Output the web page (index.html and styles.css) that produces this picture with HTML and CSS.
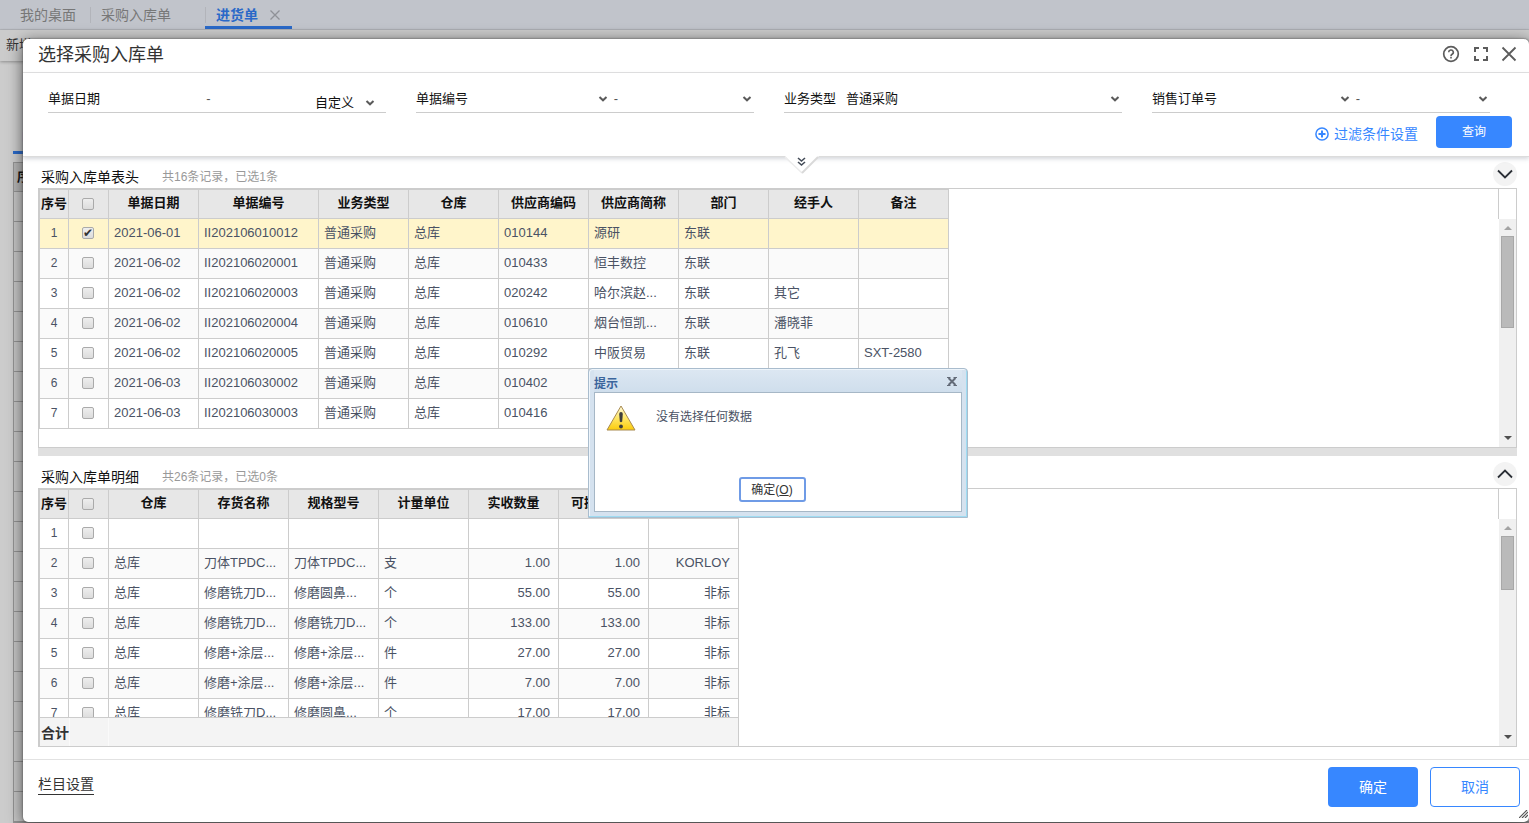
FILE: index.html
```html
<!DOCTYPE html>
<html lang="zh-CN">
<head>
<meta charset="utf-8">
<title>进货单</title>
<link rel="stylesheet" href="styles.css">
</head>
<body>
<svg class="defs" width="0" height="0" aria-hidden="true">
  <symbol id="chev" viewBox="0 0 10 10"><path d="M1.500 3 5 6.300 8.500 3" fill="none" stroke="#5a5a5a" stroke-width="2"/></symbol>
</svg>
<div class="page">
  <nav class="tabs">
    <a class="tab" href="#">我的桌面</a>
    <a class="tab tab-wide" href="#">采购入库单</a>
    <a class="tab active" href="#">进货单 <svg width="12" height="12" viewBox="0 0 12 12"><path d="M1.500 1.500l9 9M10.500 1.500l-9 9" stroke="#8f9197" stroke-width="1.300"/></svg></a>
  </nav>
  <div class="toolbar">新增</div>
  <div class="sheet">
    <div class="sheet-tab">明细</div>
    <div class="sheet-grid"><div class="sheet-head">序号</div></div>
  </div>
</div>

<section class="modal" aria-label="选择采购入库单">
  <header class="modal-head">
    <h1>选择采购入库单</h1>
    <button type="button" aria-label="帮助"><svg width="18" height="18" viewBox="0 0 18 18" fill="none" stroke="#5c5c5c"><circle cx="9" cy="9" r="7.300" stroke-width="1.700"/><path d="M6.700 7.300a2.300 2.300 0 1 1 3.400 2c-.8.500-1.100.8-1.100 1.600" stroke-width="1.600"/><path d="M9 11.800v1.600" stroke-width="1.600"/></svg></button>
    <button type="button" aria-label="全屏"><svg width="18" height="18" viewBox="0 0 18 18" fill="none" stroke="#5c5c5c" stroke-width="2"><path d="M3 7V3h4M11 3h4v4M15 11v4h-4M7 15H3v-4"/></svg></button>
    <button type="button" aria-label="关闭"><svg width="18" height="18" viewBox="0 0 18 18" stroke="#5c5c5c" stroke-width="1.800"><path d="M2.500 2.500l13 13M15.500 2.500l-13 13"/></svg></button>
  </header>

  <form class="filter">
    <div class="fields">
      <div class="field">
        <label for="d1">单据日期</label>
        <input id="d1" type="text"><span class="dash">-</span><input type="text" aria-label="结束日期">
        <span class="pick range"><select aria-label="日期范围"><option>自定义</option></select><svg width="10" height="10"><use href="#chev"/></svg></span>
      </div>
      <div class="field">
        <label for="n1">单据编号</label>
        <span class="pick"><select id="n1"><option></option></select><svg width="10" height="10"><use href="#chev"/></svg></span><span class="dash">-</span><span class="pick end"><select aria-label="单据编号止"><option></option></select><svg width="10" height="10"><use href="#chev"/></svg></span>
      </div>
      <div class="field">
        <label for="b1">业务类型</label>
        <span class="pick"><select id="b1"><option>普通采购</option></select><svg width="10" height="10"><use href="#chev"/></svg></span>
      </div>
      <div class="field">
        <label for="s1">销售订单号</label>
        <span class="pick"><select id="s1"><option></option></select><svg width="10" height="10"><use href="#chev"/></svg></span><span class="dash">-</span><span class="pick end narrow"><select aria-label="销售订单号止"><option></option></select><svg width="10" height="10"><use href="#chev"/></svg></span>
      </div>
    </div>
    <div class="filter-actions">
      <a href="#"><svg width="14" height="14" viewBox="0 0 14 14" fill="none" stroke="#3787ff"><circle cx="7" cy="7" r="6.100" stroke-width="1.500"/><path d="M3.500 7h7M7 3.500v7" stroke-width="2"/></svg>过滤条件设置</a>
      <button class="primary query" type="button">查询</button>
    </div>
    <svg class="notch" width="36" height="20" viewBox="0 0 36 20" fill="none"><path d="M1 0 18 17 35 0z" fill="#fff"/><path d="M1 1l17 16" stroke="#ececec" stroke-width="1.500"/><path d="M18 17 34 1" stroke="#d9d9d9" stroke-width="2"/><path d="M14 2l3.500 3L21 2M14 6l3.500 3L21 6" stroke="#444c58" stroke-width="1.600"/></svg>
  </form>

  <main class="panels">
    <section class="panel">
      <div class="panel-head"><h2>采购入库单表头</h2><span>共16条记录，已选1条</span>
        <button type="button" aria-label="收起"><svg width="24" height="24" viewBox="0 0 24 24" fill="none" stroke="#2b2f36" stroke-width="1.800"><path d="M5 8.500l7 7 7-7"/></svg></button></div>
      <div class="box">
        <table>
          <colgroup><col class="c-no"><col class="c-ck"><col class="c"><col class="c-id"><col class="c"><col class="c"><col class="c"><col class="c"><col class="c"><col class="c"><col class="c"></colgroup>
          <thead><tr><th class="no">序号</th><th class="ck"><input type="checkbox" aria-label="全选"></th><th>单据日期</th><th>单据编号</th><th>业务类型</th><th>仓库</th><th>供应商编码</th><th>供应商简称</th><th>部门</th><th>经手人</th><th>备注</th></tr></thead>
          <tbody>
            <tr class="picked"><td class="no">1</td><td class="ck"><input type="checkbox" aria-label="选择1" checked></td><td>2021-06-01</td><td>II202106010012</td><td>普通采购</td><td>总库</td><td>010144</td><td>源研</td><td>东联</td><td></td><td></td></tr>
            <tr><td class="no">2</td><td class="ck"><input type="checkbox" aria-label="选择2"></td><td>2021-06-02</td><td>II202106020001</td><td>普通采购</td><td>总库</td><td>010433</td><td>恒丰数控</td><td>东联</td><td></td><td></td></tr>
            <tr><td class="no">3</td><td class="ck"><input type="checkbox" aria-label="选择3"></td><td>2021-06-02</td><td>II202106020003</td><td>普通采购</td><td>总库</td><td>020242</td><td>哈尔滨赵...</td><td>东联</td><td>其它</td><td></td></tr>
            <tr><td class="no">4</td><td class="ck"><input type="checkbox" aria-label="选择4"></td><td>2021-06-02</td><td>II202106020004</td><td>普通采购</td><td>总库</td><td>010610</td><td>烟台恒凯...</td><td>东联</td><td>潘晓菲</td><td></td></tr>
            <tr><td class="no">5</td><td class="ck"><input type="checkbox" aria-label="选择5"></td><td>2021-06-02</td><td>II202106020005</td><td>普通采购</td><td>总库</td><td>010292</td><td>中阪贸易</td><td>东联</td><td>孔飞</td><td>SXT-2580</td></tr>
            <tr><td class="no">6</td><td class="ck"><input type="checkbox" aria-label="选择6"></td><td>2021-06-03</td><td>II202106030002</td><td>普通采购</td><td>总库</td><td>010402</td><td></td><td></td><td></td><td></td></tr>
            <tr><td class="no">7</td><td class="ck"><input type="checkbox" aria-label="选择7"></td><td>2021-06-03</td><td>II202106030003</td><td>普通采购</td><td>总库</td><td>010416</td><td></td><td></td><td></td><td></td></tr>
          </tbody>
        </table>
        <div class="rail"><div class="corner"></div><div class="track"><i class="up"></i><i class="thumb"></i><i class="down"></i></div></div>
      </div>
    </section>
    <div class="splitter"></div>
    <section class="panel lower">
      <div class="panel-head"><h2>采购入库单明细</h2><span>共26条记录，已选0条</span>
        <button type="button" aria-label="展开"><svg width="24" height="24" viewBox="0 0 24 24" fill="none" stroke="#2b2f36" stroke-width="1.800"><path d="M5 15.500l7-7 7 7"/></svg></button></div>
      <div class="box">
        <div class="grid">
          <div class="clip">
            <table>
              <colgroup><col class="c-no"><col class="c-ck"><col class="c"><col class="c"><col class="c"><col class="c"><col class="c"><col class="c"><col class="c"></colgroup>
              <thead><tr><th class="no">序号</th><th class="ck"><input type="checkbox" aria-label="全选明细"></th><th>仓库</th><th>存货名称</th><th>规格型号</th><th>计量单位</th><th>实收数量</th><th>可操作数量</th><th></th></tr></thead>
              <tbody>
                <tr><td class="no">1</td><td class="ck"><input type="checkbox" aria-label="明细1"></td><td></td><td></td><td></td><td></td><td></td><td></td><td></td></tr>
                <tr><td class="no">2</td><td class="ck"><input type="checkbox" aria-label="明细2"></td><td>总库</td><td>刀体TPDC...</td><td>刀体TPDC...</td><td>支</td><td class="num">1.00</td><td class="num">1.00</td><td class="num">KORLOY</td></tr>
                <tr><td class="no">3</td><td class="ck"><input type="checkbox" aria-label="明细3"></td><td>总库</td><td>修磨铣刀D...</td><td>修磨圆鼻...</td><td>个</td><td class="num">55.00</td><td class="num">55.00</td><td class="num">非标</td></tr>
                <tr><td class="no">4</td><td class="ck"><input type="checkbox" aria-label="明细4"></td><td>总库</td><td>修磨铣刀D...</td><td>修磨铣刀D...</td><td>个</td><td class="num">133.00</td><td class="num">133.00</td><td class="num">非标</td></tr>
                <tr><td class="no">5</td><td class="ck"><input type="checkbox" aria-label="明细5"></td><td>总库</td><td>修磨+涂层...</td><td>修磨+涂层...</td><td>件</td><td class="num">27.00</td><td class="num">27.00</td><td class="num">非标</td></tr>
                <tr><td class="no">6</td><td class="ck"><input type="checkbox" aria-label="明细6"></td><td>总库</td><td>修磨+涂层...</td><td>修磨+涂层...</td><td>件</td><td class="num">7.00</td><td class="num">7.00</td><td class="num">非标</td></tr>
                <tr><td class="no">7</td><td class="ck"><input type="checkbox" aria-label="明细7"></td><td>总库</td><td>修磨铣刀D...</td><td>修磨圆鼻...</td><td>个</td><td class="num">17.00</td><td class="num">17.00</td><td class="num">非标</td></tr>
              </tbody>
            </table>
          </div>
          <div class="total">合计</div>
        </div>
        <div class="rail"><div class="corner"></div><div class="track"><i class="up"></i><i class="thumb short"></i><i class="down"></i></div></div>
      </div>
    </section>
  </main>

  <footer class="modal-foot">
    <a href="#">栏目设置</a>
    <button class="primary" type="button">确定</button>
    <button class="plain" type="button">取消</button>
    <svg class="grip" width="9" height="8" viewBox="0 0 9 8" stroke="#555" stroke-width="1.200"><path d="M0 8 8 0M3 8l6-6M6 8l3-3"/></svg>
  </footer>
</section>

<div class="alert" role="alertdialog" aria-labelledby="alert-title">
  <div class="alert-head"><strong id="alert-title">提示</strong>
    <button type="button" aria-label="关闭提示"><svg width="10" height="9" viewBox="0 0 10 9"><path d="M1.500 1l7 7M8.500 1l-7 7" stroke="#636b78" stroke-width="2"/><path d="M0 .5h3.500M6.500.5H10M0 8.500h3.500M6.500 8.500H10" stroke="#636b78"/></svg></button></div>
  <div class="alert-body">
    <div class="alert-msg">
      <svg width="30" height="28" viewBox="0 0 30 28"><defs><linearGradient id="warn" x1="0" y1="0" x2="0" y2="1"><stop offset="0" stop-color="#fffbe0"/><stop offset=".5" stop-color="#ffe768"/><stop offset="1" stop-color="#fbcb0a"/></linearGradient></defs><path d="M15 2 29 26H1z" fill="url(#warn)" stroke="#a88a50" stroke-linejoin="round"/><path d="M13.200 10q0-2 1.800-2t1.800 2l-.6 7.500q-1.200 1.500-2.400 0z" fill="#3d3d3d"/><circle cx="15" cy="22.500" r="1.900" fill="#3d3d3d"/></svg>
      <span>没有选择任何数据</span>
    </div>
    <button class="ok" type="button">确定(<u>O</u>)</button>
  </div>
</div>
</body>
</html>
```
FILE: styles.css
```css
* { box-sizing: border-box; }
html, body { height: 100%; }
body {
  margin: 0;
  overflow: hidden;
  background: #ccc;
  font: 13px/18px "Liberation Sans", "Noto Sans CJK SC", sans-serif;
  color: #4a5264;
}
button, input, select { font: inherit; color: inherit; margin: 0; padding: 0; border: 0; background: none; }
a { color: inherit; text-decoration: none; }
svg { display: block; }
.defs { position: absolute; }
h1, h2 { margin: 0; font-weight: 400; }

/* page behind the dialog */
.page { height: 100%; display: flex; flex-direction: column; }
.tabs { display: flex; height: 30px; padding-left: 9px; background: #c1c4cb; border-bottom: 1px solid #b4b6bb; font-size: 14px; color: #777; }
.tab { height: 29px; padding: 0 14px 0 11px; line-height: 30px; }
.tab + .tab { padding-left: 11px; background: linear-gradient(#b2b4ba, #b2b4ba) 0 7px / 1px 16px no-repeat; }
.tab-wide { padding-right: 34px; }
.tab.active { display: flex; align-items: center; gap: 11px; padding-top: 3px; padding-right: 11px; line-height: 24px; border-bottom: 3px solid #2a69c8; color: #2a69c8; font-weight: 700; }
.toolbar { height: 31px; padding-left: 6px; line-height: 30px; background: #cbcbcb; box-shadow: 0 1px 3px rgba(0, 0, 0, .3); color: #333; }
.sheet { flex: 1; min-height: 0; display: flex; flex-direction: column; padding: 60px 0 0 13px; }
.sheet-tab { width: 60px; height: 33px; padding: 8px 0 0 9px; border-bottom: 3px solid #2a69c8; color: #2a69c8; }
.sheet-grid { flex: 1; margin-top: 8px; border: 1px solid #949494; border-right: 0; background: repeating-linear-gradient(#c6c6c6 0 28px, #949494 28px 29px, #c6c6c6 29px 30px); }
.sheet-head { height: 28px; padding-left: 3px; line-height: 28px; background: #b6b6b6; color: #111; font-weight: 700; }

/* dialog shell */
.modal {
  position: absolute;
  inset: 39px 0 1px 23px;
  display: flex;
  flex-direction: column;
  background: #fff;
  border-radius: 5px;
  box-shadow: 0 0 2px #444, 0 3px 16px rgba(0, 0, 0, .6);
}
.modal-head { display: flex; align-items: center; gap: 12px; height: 34px; padding: 0 11px 2px 15px; border-bottom: 1px solid #e2e2e2; color: #333; }
.modal-head h1 { flex: 1; font-size: 18px; line-height: 24px; }
.modal-head button { margin-bottom: 2px; }
.modal-head button + button + button { margin-left: -2px; }

.filter { position: relative; z-index: 1; height: 84px; padding: 13px 17px 0 25px; background: #fff; border-bottom: 1px solid #dcdcdc; box-shadow: 0 2px 4px rgba(90, 100, 120, .25); color: #111; }
.fields { display: grid; grid-template-columns: repeat(4, minmax(0, 1fr)); gap: 30px; padding-right: 22px; }
.field { display: flex; height: 27px; border-bottom: 1px solid #ccc; line-height: 26px; }
.field label { margin-right: 10px; white-space: nowrap; }
.field input { flex: 1; width: 0; min-width: 0; }
.dash { width: 12px; text-align: center; color: #555; }
.pick { flex: 1; display: grid; align-items: center; padding-right: 2px; }
.pick select { grid-area: 1 / 1; height: 26px; appearance: none; outline: 0; }
.pick svg { grid-area: 1 / 1; justify-self: end; pointer-events: none; }
.pick.end { flex: 0 0 132px; }
.pick.narrow { flex-basis: 126px; }
.pick.range { flex: 0 0 71px; margin-left: 8px; padding: 4px 11px 0 0; }
.filter-actions { display: flex; justify-content: flex-end; gap: 18px; padding-top: 3px; }
.filter-actions a { display: flex; align-items: center; gap: 5px; padding-top: 3px; font-size: 14px; color: #3787ff; }
.primary, .plain { width: 90px; height: 40px; border-radius: 4px; font-size: 14px; }
.primary { background: #3787ff; color: #fff; }
.plain { border: 1px solid #3787ff; color: #3787ff; }
.primary.query { width: 76px; height: 32px; font-size: 12px; }
.notch { position: absolute; top: 83px; left: calc(50% + 8px); }

/* panels */
.panels { flex: 1; min-height: 0; display: flex; flex-direction: column; margin-top: -1px; padding: 0 12px 11px 15px; }
.panel { flex: 1 1 0; min-height: 0; display: flex; flex-direction: column; }
.panel.lower .box { margin-bottom: 1px; }
.panel-head { display: flex; height: 32px; padding: 10px 0 0 3px; line-height: 22px; }
.panel-head h2 { font-size: 14px; line-height: 22px; color: #111; }
.panel-head span { flex: 1; margin-left: 23px; font-size: 12px; color: #999; }
.panel-head button { align-self: flex-start; margin-top: -4px; border-radius: 50%; background: #f3f3f3; }
.splitter { height: 8px; background: #e0e0e0; }
.box { flex: 1; min-height: 0; display: flex; justify-content: space-between; align-items: flex-start; border: 1px solid #ccc; overflow: hidden; }

table { table-layout: fixed; width: min-content; border-collapse: separate; border-spacing: 0; border: solid #ccc; border-width: 1px 0 0 1px; }
.c { width: 90px; }
.c-no { width: 29px; }
.c-ck { width: 40px; }
.c-id { width: 120px; }
th, td { height: 30px; padding: 0 5px 2px; border: solid #ccc; border-width: 0 1px 1px 0; line-height: 18px; text-align: left; white-space: nowrap; overflow: hidden; }
th { height: 29px; padding: 0 0 2px; background: #e7e7e7; color: #111; text-align: center; }
td.no { padding: 0 0 1px; font-size: 12px; text-align: center; }
th.no { padding: 0 0 1px; }
td.ck, th.ck { padding: 0 0 1px 13px; }
td.num { padding-right: 8px; text-align: right; }
tbody tr:nth-child(even) { background: #fafafa; }
tr.picked { background: #fff5cb; }
input[type="checkbox"] { appearance: none; display: block; width: 12px; height: 12px; border: 1px solid #aaa; border-radius: 2px; background: linear-gradient(#eee, #dcdcdc); }
input[type="checkbox"]:checked::before { content: "✔"; display: block; font: 12px/10px "DejaVu Sans", sans-serif; color: #333; }

.grid { height: 100%; display: flex; flex-direction: column; }
.clip { flex: 1; min-height: 0; overflow: hidden; }
.total { height: 29px; padding-left: 1px; border: solid #ccc; border-width: 1px 1px 0 1px; background: linear-gradient(#fafafa, #fafafa) 29px 0 / 1px 100% no-repeat, linear-gradient(#fafafa, #fafafa) 68px 0 / 1px 100% no-repeat, #f4f4f4; color: #333; font-size: 14px; font-weight: 700; line-height: 30px; }

.rail { align-self: stretch; width: 18px; display: flex; flex-direction: column; }
.corner { height: 30px; border-left: 1px solid #ccc; }
.track { flex: 1; display: flex; flex-direction: column; align-items: center; margin-left: 1px; background: #f0f0f0; }
.up, .down { border: solid transparent; border-width: 0 4px; }
.up { margin: 7px 0 6px; border-bottom: 4px solid #a3a3a3; }
.down { margin: auto 0 7px; border-top: 4px solid #505050; }
.thumb { width: 13px; height: 92px; background: #bababa; border: 1px solid #a8a8a8; }
.thumb.short { height: 54px; }

.modal-foot { display: flex; gap: 12px; height: 63px; padding: 7px 9px 0 15px; border-top: 1px solid #e2e2e2; color: #333; font-size: 14px; }
.modal-foot a { margin: 8px auto auto 0; line-height: 19px; border-bottom: 1px solid #333; }
.grip { position: absolute; right: 1px; bottom: 4px; }

/* message box */
.alert { position: absolute; top: 368px; left: 588px; width: 380px; height: 150px; display: flex; flex-direction: column; padding: 1px 5px 5px; border: 1px solid #a9bccd; border-radius: 4px 4px 0 0; background: #d5e2ef; box-shadow: inset -1px -1px #9fdcf2, inset 1px 1px #eef5fb; font-size: 12px; }
.alert-head { display: flex; justify-content: space-between; height: 22px; background: linear-gradient(#dce7f2, #cfdeec); }
.alert-head strong { color: #3b659c; line-height: 28px; }
.alert-head button { height: 22px; margin-right: 5px; }
.alert-body { flex: 1; display: flex; flex-direction: column; justify-content: space-between; align-items: center; padding: 11px 12px 9px 11px; border: 1px solid #a6b7c6; background: #fff; }
.alert-msg { display: flex; gap: 20px; align-self: stretch; line-height: 26px; }
.ok { width: 67px; height: 25px; margin-right: 11px; border: 2px solid #6f9be6; border-radius: 3px; color: #333; }
```
